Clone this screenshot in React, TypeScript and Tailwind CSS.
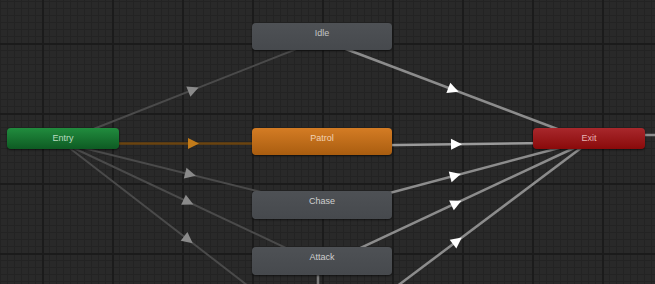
import React from 'react'

type Pt = [number, number]

interface Edge {
  from: Pt
  to: Pt
  arrowX: number
  line: string
  arrow: string
  width: number
}

// transitions, drawn under the state nodes
const edges: Edge[] = [
  { from: [63, 141], to: [322, 39], arrowX: 193, line: '#4a4a4a', arrow: '#8a8a8a', width: 2 },
  { from: [63, 143.5], to: [322, 143.5], arrowX: 193, line: '#6a430f', arrow: '#c27b1a', width: 2.5 },
  { from: [63, 143], to: [322, 207], arrowX: 190, line: '#4a4a4a', arrow: '#8a8a8a', width: 2 },
  { from: [63, 143], to: [322, 265], arrowX: 188, line: '#4a4a4a', arrow: '#8a8a8a', width: 2 },
  { from: [63, 143], to: [322, 343], arrowX: 188, line: '#4a4a4a', arrow: '#8a8a8a', width: 2 },
  { from: [322, 40], to: [589, 141], arrowX: 453, line: '#8c8c8c', arrow: '#ffffff', width: 2.5 },
  { from: [322, 146], to: [589, 142.5], arrowX: 456, line: '#9a9a9a', arrow: '#ffffff', width: 2.5 },
  { from: [322, 211], to: [589, 140], arrowX: 455, line: '#8c8c8c', arrow: '#ffffff', width: 2.5 },
  { from: [322, 266], to: [589, 141], arrowX: 456, line: '#8c8c8c', arrow: '#ffffff', width: 2.5 },
  { from: [360, 314], to: [589, 142], arrowX: 457, line: '#8c8c8c', arrow: '#ffffff', width: 2.5 },
]

function Arrow({ e }: { e: Edge }) {
  const [x1, y1] = e.from
  const [x2, y2] = e.to
  const t = (e.arrowX - x1) / (x2 - x1)
  const cx = e.arrowX
  const cy = y1 + (y2 - y1) * t
  const ang = (Math.atan2(y2 - y1, x2 - x1) * 180) / Math.PI
  return (
    <g transform={`translate(${cx} ${cy}) rotate(${ang})`}>
      <polygon points="6,0 -5,-5.5 -5,5.5" fill={e.arrow} />
    </g>
  )
}

function Canvas() {
  return (
    <svg className="absolute inset-0" width={655} height={284}>
      <defs>
        <pattern id="minor" x={42} y={43} width={7} height={7} patternUnits="userSpaceOnUse">
          <rect width={7} height={1} fill="#232323" />
          <rect width={1} height={7} fill="#232323" />
        </pattern>
        <pattern id="major" x={42} y={43} width={70} height={70} patternUnits="userSpaceOnUse">
          <rect width={70} height={2} fill="#1b1b1b" />
          <rect width={2} height={70} fill="#1b1b1b" />
        </pattern>
      </defs>
      <rect width={655} height={284} fill="#292929" />
      <rect width={655} height={284} fill="url(#minor)" />
      <rect width={655} height={284} fill="url(#major)" />

      {/* exit -> off to the right, attack -> down */}
      <line x1={589} y1={135} x2={660} y2={135} stroke="#8c8c8c" strokeWidth={2.5} />
      <line x1={318} y1={261} x2={318} y2={290} stroke="#7a7a7a" strokeWidth={2.5} />

      {edges.map((e, i) => (
        <line key={i} x1={e.from[0]} y1={e.from[1]} x2={e.to[0]} y2={e.to[1]} stroke={e.line} strokeWidth={e.width} />
      ))}
      {edges.map((e, i) => (
        <Arrow key={i} e={e} />
      ))}
    </svg>
  )
}

const nodes = [
  { label: 'Idle', x: 252, y: 23, w: 140, h: 27, cls: 'bg-[linear-gradient(#4e5155,#46494d)] text-[#c4c4c4]' },
  { label: 'Entry', x: 7, y: 128, w: 112, h: 21, cls: 'bg-[linear-gradient(#218c3e,#0e5b23)] text-[#b9dcc0]' },
  { label: 'Patrol', x: 252, y: 128, w: 140, h: 27, cls: 'bg-[linear-gradient(#d47c24,#a95d10)] text-[#f1d2b4]' },
  { label: 'Exit', x: 533, y: 128, w: 112, h: 21, cls: 'bg-[linear-gradient(#a8282c,#8a0a0a)] text-[#e6b3b3]' },
  { label: 'Chase', x: 252, y: 191, w: 140, h: 28, cls: 'bg-[linear-gradient(#4e5155,#46494d)] text-[#cfcfcf]' },
  { label: 'Attack', x: 252, y: 247, w: 140, h: 28, cls: 'bg-[linear-gradient(#4e5155,#46494d)] text-[#cfcfcf]' },
]

export default function App() {
  return (
    <div className="relative h-[284px] w-[655px] overflow-hidden bg-[#292929] font-['Liberation_Sans',Arial,sans-serif]">
      <Canvas />
      {nodes.map((n) => (
        <div
          key={n.label}
          className={`absolute flex justify-center rounded-[4px] pt-[4px] text-[9px] leading-[12px] shadow-[0_1px_2px_rgba(0,0,0,0.6)] ${n.cls}`}
          style={{ left: n.x, top: n.y, width: n.w, height: n.h }}
        >
          {n.label}
        </div>
      ))}
    </div>
  )
}
